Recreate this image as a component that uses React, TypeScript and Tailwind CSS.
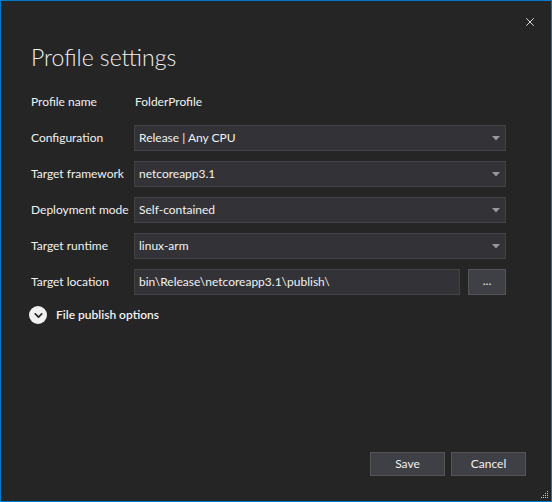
import { X, ChevronDown } from "lucide-react";

const rows = [
  { label: "Configuration", value: "Release | Any CPU" },
  { label: "Target framework", value: "netcoreapp3.1" },
  { label: "Deployment mode", value: "Self-contained" },
  { label: "Target runtime", value: "linux-arm" },
];

function Select({ value }: { value: string }) {
  return (
    <div className="flex h-[26px] items-center justify-between border border-[#434346] bg-[#333337] pl-[4px] pr-[5px] text-[#f1f1f1]">
      <span>{value}</span>
      <svg width="8" height="5" viewBox="0 0 8 5" className="mt-[1px]">
        <path d="M0 0h8L4 4.5z" fill="#999999" />
      </svg>
    </div>
  );
}

export default function App() {
  return (
    <div
      className="relative flex h-[502px] w-[552px] flex-col border border-[#007acc] bg-[#252526] text-[12px] text-[#f1f1f1]"
      style={{ fontFamily: "Lato, 'Open Sans', sans-serif" }}
    >
      <div className="flex justify-end pr-[14px] pt-[14px]">
        <X size={14} strokeWidth={1.5} className="text-[#f1f1f1]" />
      </div>

      <h1 className="pl-[30px] pt-[12px] text-[23px] font-light leading-[32px] text-[#f1f1f1]">
        Profile settings
      </h1>

      <div className="mt-[16px] grid grid-cols-[103px_1fr] gap-y-[10px] pl-[30px] pr-[45px]">
        <div className="flex h-[26px] items-center">Profile name</div>
        <div className="flex h-[26px] items-center pl-[1px]">FolderProfile</div>

        {rows.map((r) => (
          <div key={r.label} className="contents">
            <div className="flex h-[26px] items-center">{r.label}</div>
            <Select value={r.value} />
          </div>
        ))}

        <div className="flex h-[26px] items-center">Target location</div>
        <div className="flex gap-[8px]">
          <div className="flex h-[26px] flex-1 items-center border border-[#434346] bg-[#333337] pl-[4px]">
            bin\Release\netcoreapp3.1\publish\
          </div>
          <button className="flex h-[26px] w-[38px] items-center justify-center border border-[#555558] bg-[#3f3f46] pb-[3px] text-[#f1f1f1]">
            ...
          </button>
        </div>
      </div>

      <div className="mt-[11px] flex items-center gap-[9px] pl-[28px]">
        <span className="flex h-[18px] w-[18px] items-center justify-center rounded-full bg-[#f1f1f1]">
          <ChevronDown size={13} strokeWidth={3} className="mt-[1px] text-[#252526]" />
        </span>
        <span className="font-semibold">File publish options</span>
      </div>

      <div className="mt-auto flex justify-end gap-[6px] pb-[25px] pr-[25px]">
        <button className="h-[24px] w-[75px] border border-[#555558] bg-[#3f3f46] text-[#f1f1f1]">
          Save
        </button>
        <button className="h-[24px] w-[75px] border border-[#555558] bg-[#3f3f46] text-[#f1f1f1]">
          Cancel
        </button>
      </div>

      <svg
        width="8"
        height="8"
        viewBox="0 0 8 8"
        className="absolute bottom-[2px] right-[2px]"
      >
        {[
          [6, 0], [4, 2], [6, 2], [2, 4], [4, 4], [6, 4], [0, 6], [2, 6], [4, 6], [6, 6],
        ].map(([x, y]) => (
          <rect key={`${x}-${y}`} x={x} y={y} width="1" height="1" fill="#c8c8c8" />
        ))}
      </svg>
    </div>
  );
}
